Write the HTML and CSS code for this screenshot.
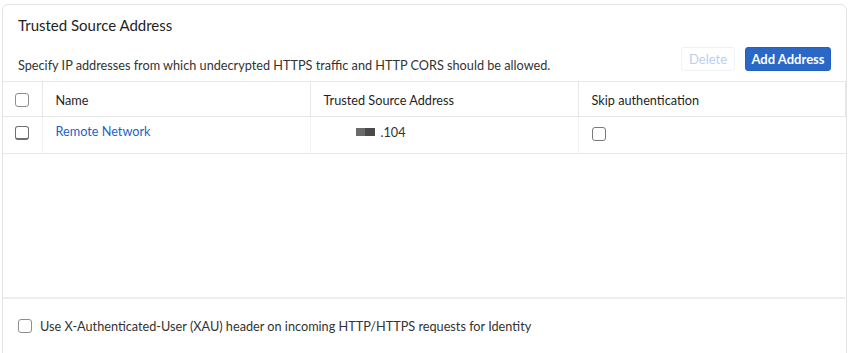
FILE: index.html
```html
<!DOCTYPE html>
<html lang="en">
<head>
    <meta charset="UTF-8">
    <meta name="viewport" content="width=device-width, initial-scale=1.0">
    <title>Trusted Source Address</title>
    <link rel="stylesheet" href="styles.css">
</head>
<body>
    <div class="card">
        <h2 class="card-title">Trusted Source Address</h2>

        <div class="toolbar">
            <p class="desc">Specify IP addresses from which undecrypted HTTPS traffic and HTTP CORS should be allowed.</p>
            <div class="actions">
                <button class="btn btn-ghost" disabled>Delete</button>
                <button class="btn btn-primary">Add Address</button>
            </div>
        </div>

        <div class="table-wrap">
            <table class="grid">
                <colgroup>
                    <col class="w-check">
                    <col class="w-name">
                    <col class="w-addr">
                    <col>
                </colgroup>
                <thead>
                    <tr>
                        <th class="col-check"><span class="box"></span></th>
                        <th>Name</th>
                        <th>Trusted Source Address</th>
                        <th>Skip authentication</th>
                    </tr>
                </thead>
                <tbody>
                    <tr>
                        <td class="col-check"><span class="box box-dark"></span></td>
                        <td><a href="#" class="link">Remote Network</a></td>
                        <td><span class="addr"><span class="redact"></span>.104</span></td>
                        <td class="col-skip"><span class="box box-mid"></span></td>
                    </tr>
                </tbody>
            </table>
        </div>

        <div class="footer">
            <label class="check-line">
                <span class="box"></span>
                Use X-Authenticated-User (XAU) header on incoming HTTP/HTTPS requests for Identity
            </label>
        </div>
    </div>
</body>
</html>
```

FILE: styles.css
```css
body {
    margin: 0;
    background: #fff;
    font-family: Lato, 'Noto Sans', sans-serif;
    color: #222;
}
.card {
    margin: 4px 3px 0 2px;
    height: 370px;
    border: 1px solid #e4e4e4;
    border-radius: 6px;
    background: #fff;
}
.card-title {
    margin: 0;
    padding: 11px 15px 0;
    font-size: 15px;
    font-weight: 400;
    line-height: 18px;
    color: #1f1f1f;
}
.toolbar {
    display: flex;
    align-items: flex-end;
    justify-content: space-between;
    padding: 13px 15px 10px;
}
.desc {
    margin: 0 0 -3px;
    font-size: 12.7px;
    line-height: 18px;
    color: #333;
}
.actions {
    display: flex;
    gap: 10px;
}
.btn {
    height: 24px;
    padding: 0;
    border-radius: 3px;
    font-family: inherit;
    font-size: 13px;
    font-weight: 700;
    line-height: 22px;
    white-space: nowrap;
}
.btn-ghost {
    width: 54px;
    background: #fff;
    border: 1px solid #eef1f6;
    color: #b9cff0;
    font-weight: 400;
}
.btn-primary {
    width: 86px;
    background: #2a68c8;
    border: 1px solid #2460bd;
    color: #fff;
}
.table-wrap {
    height: 216px;
}
.grid {
    width: 100%;
    table-layout: fixed;
    border-collapse: collapse;
    font-size: 12.7px;
}
.w-check { width: 39px; }
.w-name { width: 268px; }
.w-addr { width: 268px; }
.grid th, .grid td {
    text-align: left;
    border: 1px solid #e7e7e7;
    padding: 0 13px;
}
.grid th {
    height: 32px;
    font-weight: 400;
    color: #1f1f1f;
    padding-top: 2px;
}
.grid td {
    height: 30px;
    border-left-color: #f3f3f3;
    border-right-color: #f3f3f3;
    vertical-align: top;
    padding-top: 6px;
}
.grid tr > :first-child {
    border-left: none;
}
.grid tr > :last-child {
    border-right: none;
}
.grid thead tr > :last-child {
    border-right: 1px solid #e7e7e7;
}
.grid .col-check {
    padding: 0 0 0 12px;
}
.grid td.col-check {
    padding-top: 6px;
}
.col-skip .box { margin-top: 3px; }
.box {
    display: inline-block;
    width: 12px;
    height: 12px;
    border: 1px solid #8e8e8e;
    border-radius: 3px;
    background: #fff;
    vertical-align: middle;
}
.box-dark {
    border-color: #6f6f6f;
    border-bottom-width: 2px;
    height: 11px;
}
.box-mid {
    border-color: #7a7a7a;
}
.link {
    color: #2362c4;
    text-decoration: none;
}
.addr {
    display: inline-flex;
    align-items: center;
    gap: 6px;
    padding-left: 32px;
    color: #333;
}
.redact {
    display: inline-block;
    width: 19px;
    height: 8px;
    background: linear-gradient(90deg, #6a6a6a 0 50%, #4a4a4a 50% 100%);
}
.footer {
    border-top: 2px solid #eeeeee;
    margin-right: 1px;
    padding: 19px 15px 20px;
}
.check-line {
    display: flex;
    align-items: center;
    gap: 8px;
    font-size: 12.7px;
    color: #333;
}
```
